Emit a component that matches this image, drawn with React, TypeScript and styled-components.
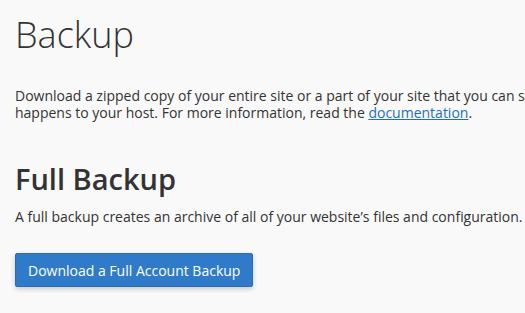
import React from 'react';
import styled, { createGlobalStyle } from 'styled-components';

const GlobalStyle = createGlobalStyle`
  html, body {
    margin: 0;
    padding: 0;
    background: #f9f9f9;
  }
  body {
    font-family: 'Open Sans', 'Liberation Sans', sans-serif;
    color: #333333;
    overflow: hidden;
  }
`;

const Page = styled.div`
  width: 525px;
  height: 313px;
  padding: 15px 15px 0 15px;
  box-sizing: border-box;
  white-space: nowrap;
  overflow: hidden;
`;

const PageTitle = styled.h1`
  font-size: 36px;
  font-weight: 300;
  line-height: 1.1;
  margin: 0 0 32px 0;
  color: #333333;
`;

const Intro = styled.p`
  font-size: 14px;
  line-height: 17px;
  margin: 0 0 42px 0;
`;

const DocLink = styled.a`
  color: #1a6fc4;
  text-decoration: underline;
`;

const SectionTitle = styled.h2`
  font-size: 29px;
  font-weight: 600;
  line-height: 1.1;
  margin: 0 0 13px 0;
  color: #333333;
`;

const SectionText = styled.p`
  font-size: 14px;
  line-height: 20px;
  margin: 0 0 26px 0;
`;

const PrimaryButton = styled.button`
  font-family: 'Open Sans', 'Liberation Sans', sans-serif;
  font-size: 14px;
  color: #ffffff;
  background: #2f7bc9;
  border: 1px solid #2a6db3;
  border-radius: 2px;
  height: 34px;
  padding: 0 12px;
  box-shadow: 0 2px 5px rgba(0, 0, 0, 0.2);
  cursor: pointer;
`;

export default function App() {
  return (
    <>
      <GlobalStyle />
      <Page>
        <PageTitle>Backup</PageTitle>
        <Intro>
          Download a zipped copy of your entire site or a part of your site that you can save to your computer. If something
          <br />
          happens to your host. For more information, read the <DocLink href="#">documentation</DocLink>.
        </Intro>
        <SectionTitle>Full Backup</SectionTitle>
        <SectionText>
          A full backup creates an archive of all of your website’s files and configuration. You can use this file to move
        </SectionText>
        <PrimaryButton>Download a Full Account Backup</PrimaryButton>
      </Page>
    </>
  );
}
